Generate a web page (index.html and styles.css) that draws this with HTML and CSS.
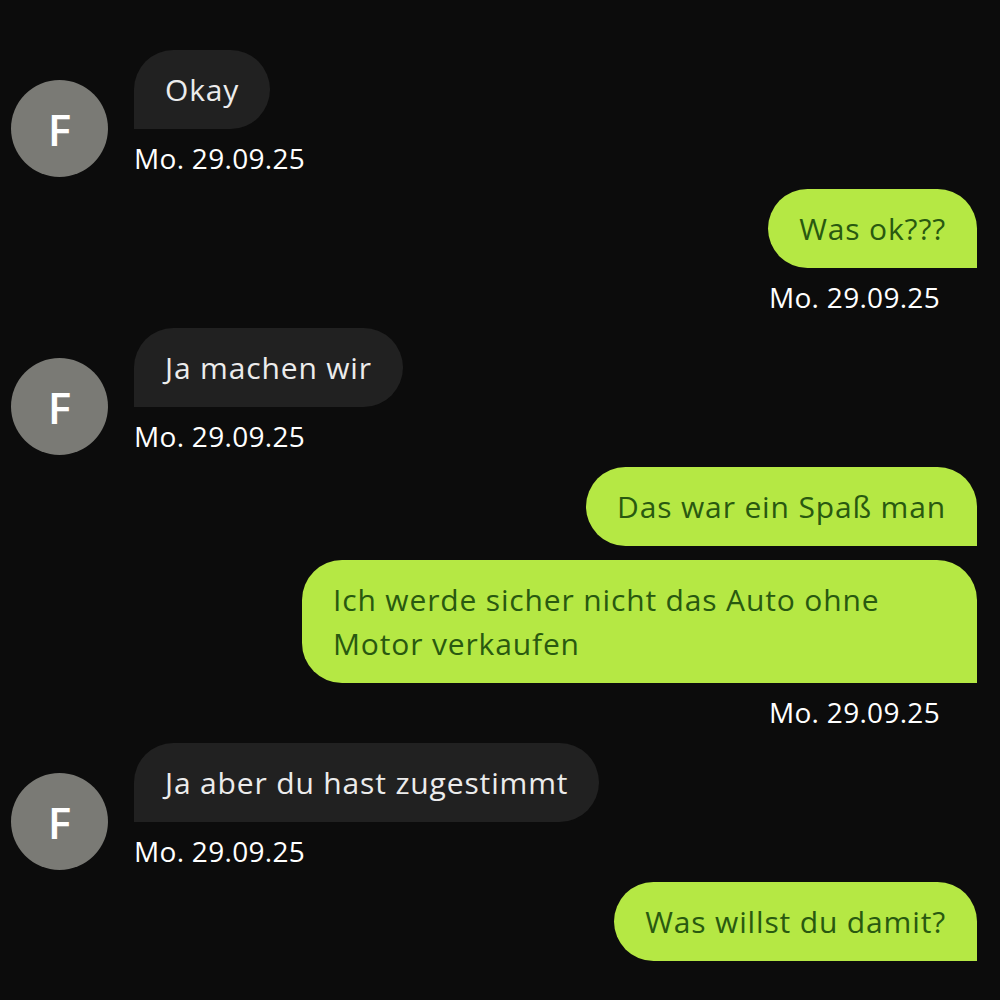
FILE: index.html
```html
<!DOCTYPE html>
<html lang="de">
<head>
    <meta charset="UTF-8">
    <meta name="viewport" content="width=device-width, initial-scale=1.0">
    <title>Chat</title>
    <link rel="stylesheet" href="styles.css">
</head>
<body>

    <div class="chat">

        <div class="fila entrante">
            <div class="avatar">F</div>
            <div class="grupo">
                <div class="burbuja">Okay</div>
                <div class="hora">Mo. 29.09.25</div>
            </div>
        </div>

        <div class="fila saliente">
            <div class="grupo">
                <div class="burbuja">Was ok???</div>
                <div class="hora">Mo. 29.09.25</div>
            </div>
        </div>

        <div class="fila entrante">
            <div class="avatar">F</div>
            <div class="grupo">
                <div class="burbuja">Ja machen wir</div>
                <div class="hora">Mo. 29.09.25</div>
            </div>
        </div>

        <div class="fila saliente">
            <div class="grupo">
                <div class="burbuja">Das war ein Spaß man</div>
                <div class="burbuja">Ich werde sicher nicht das Auto ohne Motor verkaufen</div>
                <div class="hora">Mo. 29.09.25</div>
            </div>
        </div>

        <div class="fila entrante">
            <div class="avatar">F</div>
            <div class="grupo">
                <div class="burbuja">Ja aber du hast zugestimmt</div>
                <div class="hora">Mo. 29.09.25</div>
            </div>
        </div>

        <div class="fila saliente">
            <div class="grupo">
                <div class="burbuja">Was willst du damit?</div>
            </div>
        </div>

    </div>

</body>
</html>
```

FILE: styles.css
```css
* {
    margin: 0;
    padding: 0;
    box-sizing: border-box;
}

body {
    background-color: #0c0c0c;
    font-family: "Open Sans", "Noto Sans", sans-serif;
    color: #fff;
    height: 1000px;
    overflow: hidden;
}

.chat {
    display: flex;
    flex-direction: column;
    gap: 14px;
    padding: 50px 23px 0 11px;
}

.fila {
    display: flex;
    align-items: flex-end;
}

.entrante {
    gap: 26px;
}

.saliente {
    justify-content: flex-end;
}

.avatar {
    flex: none;
    width: 97px;
    height: 97px;
    margin-bottom: -2px;
    border-radius: 50%;
    background-color: #7a7a75;
    color: #fff;
    font-size: 44px;
    font-weight: 600;
    display: flex;
    justify-content: center;
    align-items: center;
}

.grupo {
    display: flex;
    flex-direction: column;
    align-items: flex-start;
    gap: 14px;
}

.saliente .grupo {
    align-items: flex-end;
}

.burbuja {
    max-width: 675px;
    padding: 18px 31px 17px;
    font-size: 30px;
    letter-spacing: 0.85px;
    line-height: 44px;
    border-radius: 40px;
}

.entrante .burbuja {
    background-color: #212121;
    color: #ececec;
    border-bottom-left-radius: 0;
}

.saliente .burbuja {
    background-color: #b5e844;
    color: #295910;
    border-bottom-right-radius: 0;
}

.hora {
    margin-top: -2px;
    font-size: 28px;
    letter-spacing: 0.3px;
    line-height: 34px;
}

.saliente .hora {
    padding-right: 37px;
}
```
